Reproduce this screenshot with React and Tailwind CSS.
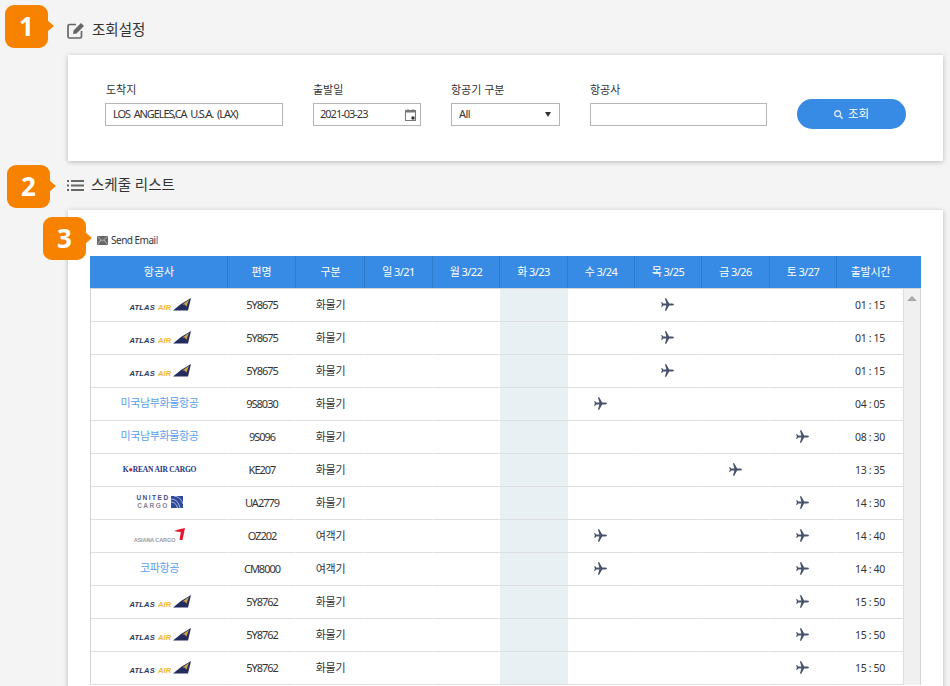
import React from "react";
import { FaSearch } from "react-icons/fa";

const days = ["일 3/21", "월 3/22", "화 3/23", "수 3/24", "목 3/25", "금 3/26", "토 3/27"];
const dayWidths = ["w-[68px]", "w-[67px]", "w-[68px]", "w-[67px]", "w-[67px]", "w-[68px]", "w-[67px]"];

const rows = [
  { air: "atlas", no: "5Y8675", type: "화물기", fly: [4], time: "01 : 15" },
  { air: "atlas", no: "5Y8675", type: "화물기", fly: [4], time: "01 : 15" },
  { air: "atlas", no: "5Y8675", type: "화물기", fly: [4], time: "01 : 15" },
  { air: "미국남부화물항공", no: "9S8030", type: "화물기", fly: [3], time: "04 : 05" },
  { air: "미국남부화물항공", no: "9S096", type: "화물기", fly: [6], time: "08 : 30" },
  { air: "korean", no: "KE207", type: "화물기", fly: [5], time: "13 : 35" },
  { air: "united", no: "UA2779", type: "화물기", fly: [6], time: "14 : 30" },
  { air: "asiana", no: "OZ202", type: "여객기", fly: [3, 6], time: "14 : 40" },
  { air: "코파항공", no: "CM8000", type: "여객기", fly: [3, 6], time: "14 : 40" },
  { air: "atlas", no: "5Y8762", type: "화물기", fly: [6], time: "15 : 50" },
  { air: "atlas", no: "5Y8762", type: "화물기", fly: [6], time: "15 : 50" },
  { air: "atlas", no: "5Y8762", type: "화물기", fly: [6], time: "15 : 50" },
];

function Badge({ n, className }) {
  return (
    <div className={`absolute z-10 w-[43px] h-[43px] rounded-[9px] bg-[#f78200] flex items-center justify-center text-white text-[26px] font-bold ${className}`}>
      {n}
      <span className="absolute left-[42px] top-[15px] border-y-[6px] border-y-transparent border-l-[7px] border-l-[#f78200]"></span>
    </div>
  );
}

function PlaneIcon() {
  return (
    <svg width="13" height="13" viewBox="0 0 13 13" className="mr-[1px] mb-[1px]">
      <path
        d="M13 6.5 Q13 5.6 10.8 5.5 L8.2 5.5 L5.2 0.3 L3.9 0.3 L5.4 5.5 L2.2 5.5 L1 3.9 L0.2 3.9 L0.9 6.5 L0.2 9.1 L1 9.1 L2.2 7.5 L5.4 7.5 L3.9 12.7 L5.2 12.7 L8.2 7.5 L10.8 7.5 Q13 7.4 13 6.5 Z"
        fill="#46526c"
      />
    </svg>
  );
}

function AtlasLogo() {
  return (
    <div className="flex items-end justify-center leading-none pl-[3px] mt-[-2px]">
      <span className="text-[7.5px] font-black italic text-[#2b3560] tracking-[0.2px] font-['Liberation_Sans'] mb-[-1px]">ATLAS</span>
      <span className="text-[7.5px] font-black italic text-[#f4b52c] tracking-[0.2px] ml-[3px] font-['Liberation_Sans'] mb-[-1px]">AIR</span>
      <svg width="18" height="13" viewBox="0 0 18 13" className="ml-[2px]">
        <path d="M0 12.5 L8 6 L18 0 L15 12.5 Z" fill="#232c5c" />
        <path d="M9.5 6.5 L16 1.8 L13.5 8.5 L11.5 6.5 Z" fill="#c9a24a" />
      </svg>
    </div>
  );
}

function KoreanLogo() {
  return (
    <div className="text-[7.5px] font-bold text-[#24347f] font-['Liberation_Serif'] tracking-[-0.2px] whitespace-nowrap leading-none mt-[-1px] ml-[1px]">
      K<span className="text-[#d8243a]">●</span>REAN AIR CARGO
    </div>
  );
}

function UnitedLogo() {
  return (
    <div className="flex items-center justify-center gap-[1px] pl-[1px] mt-[-2px]">
      <div className="text-[6.5px] leading-[8px] font-bold text-center tracking-[1.5px] font-['Liberation_Sans']">
        <div className="text-[#3f4c8f]">UNITED</div>
        <div className="text-[#7f8592]">CARGO</div>
      </div>
      <svg width="12" height="12" viewBox="0 0 12 12">
        <rect width="12" height="12" fill="#2f4a9c" />
        <path d="M0 3 Q7 3 9 12 M0 6 Q5 6 6.5 12 M3 0 Q10 1 12 8" stroke="#c7d2ee" strokeWidth="0.8" fill="none" />
      </svg>
    </div>
  );
}

function AsianaLogo() {
  return (
    <div className="flex items-end justify-center leading-none pl-[1px] mt-[-2px]">
      <span className="text-[5.5px] font-bold text-[#9a9a9a] tracking-[-0.1px] font-['Liberation_Sans'] whitespace-nowrap mb-[-1px]">ASIANA CARGO</span>
      <svg width="11" height="13" viewBox="0 0 11 13" className="ml-[-1px] mb-[2px]">
        <path d="M0 3 Q5 1 11 0 L8.5 12 L5.5 12 L6.8 4 Q3.5 4 0 3 Z" fill="#e3182d" />
      </svg>
    </div>
  );
}

function Airline({ air }) {
  if (air === "atlas") return <AtlasLogo />;
  if (air === "korean") return <KoreanLogo />;
  if (air === "united") return <UnitedLogo />;
  if (air === "asiana") return <AsianaLogo />;
  return <span className="text-[#5aa0ee] tracking-[-0.4px] mt-[-1px] ml-[1px]">{air}</span>;
}

export default function App() {
  return (
    <div className="relative h-[686px] w-[950px] overflow-hidden bg-[#f4f4f4] text-[11px] text-[#333] font-['Noto_Sans','Noto_Sans_CJK_KR',sans-serif]">
      <Badge n="1" className="left-[5px] top-[5px]" />
      <Badge n="2" className="left-[7px] top-[165px]" />
      <Badge n="3" className="left-[43px] top-[217px]" />

      <div className="pl-[68px] pr-[7px]">
        <div className="h-[55px] flex items-center gap-[7px] pt-[5px]">
          <EditIcon />
          <h2 className="text-[14.5px] text-[#333]">조회설정</h2>
        </div>

        {/* 조회 폼 */}
        <div className="h-[106px] bg-white shadow-[0_1px_5px_rgba(0,0,0,0.25)] pl-[37px] pt-[26px] flex gap-[30px]">
          <Field label="도착지" width="w-[178px]" labelClass="pl-[1px]">
            <span className="tracking-[-1.1px] [word-spacing:2px]">LOS ANGELES,CA U.S.A. (LAX)</span>
          </Field>
          <Field label="출발일" width="w-[108px]">
            <span className="tracking-[-1px] flex-1 ml-[-1px]">2021-03-23</span>
            <svg width="11" height="12" viewBox="0 0 11 12" className="mr-[-3px]">
              <rect x="0.5" y="1.5" width="10" height="10" fill="none" stroke="#777" />
              <rect x="0.5" y="1.5" width="10" height="2" fill="#777" />
              <rect x="2.5" y="0" width="1" height="2" fill="#777" />
              <rect x="7.5" y="0" width="1" height="2" fill="#777" />
              <rect x="6.5" y="7.5" width="3" height="3" fill="#333" />
            </svg>
          </Field>
          <Field label="항공기 구분" width="w-[109px]">
            <span className="flex-1 tracking-[-0.5px]">All</span>
            <span className="border-x-[3.5px] border-x-transparent border-t-[5px] border-t-[#333] mr-[1px]"></span>
          </Field>
          <Field label="항공사" width="w-[177px]"></Field>
          <button className="h-[30px] w-[109px] mt-[18px] rounded-full bg-[#388be5] text-white text-[11.5px] flex items-center justify-center gap-[5px]">
            <FaSearch className="text-[9px] text-[#dbe9fa]" />
            조회
          </button>
        </div>

        <div className="h-[49px] flex items-center gap-[7px] pb-[1px]">
          <ListIcon />
          <h2 className="text-[14.5px] text-[#333]">스케줄 리스트</h2>
        </div>

        {/* 스케줄 테이블 */}
        <div className="h-[480px] bg-white shadow-[0_1px_5px_rgba(0,0,0,0.25)] pl-[22px] pr-[22px] pt-[21px]">
          <div className="h-[25px] pl-[7px] pt-[2px] flex items-start gap-[3px] text-[10px] tracking-[-0.5px]">
            <MailIcon />
            <span>Send Emai<span className="text-[#2f6fc4]">l</span></span>
          </div>

          <div className="h-[32px] flex bg-[#388be5] text-white text-[11px] items-stretch">
            <div className="w-[138px] border-r border-[#2f7bce] flex items-center justify-center pl-[1px]">항공사</div>
            <div className="w-[68px] border-r border-[#2f7bce] flex items-center justify-center">편명</div>
            <div className="w-[69px] border-r border-[#2f7bce] flex items-center justify-center pl-[1px]">구분</div>
            {days.map((d, i) => (
              <div key={d} className={`${dayWidths[i]} border-r border-[#2f7bce] flex items-center justify-center tracking-[-0.6px]`}>{d}</div>
            ))}
            <div className="w-[67px] flex items-center justify-center tracking-[-0.2px]">출발시간</div>
          </div>

          <div className="flex border-x border-t border-[#d4d4d4]">
            <div className="w-[812px]">
              {rows.map((r, idx) => (
                <div key={idx} className="h-[33px] flex items-stretch">
                  <div className="w-[137px] flex items-center justify-center border-b border-b-[#dedede] border-r border-r-white"><Airline air={r.air} /></div>
                  <div className="w-[68px] flex items-center justify-center pl-[1px] tracking-[-1px] border-b border-b-[#dedede] border-r border-r-white">{r.no}</div>
                  <div className="w-[69px] flex items-center justify-center pl-[1px] tracking-[-0.3px] border-b border-b-[#dedede] border-r border-r-white">{r.type}</div>
                  {days.map((d, i) => (
                    <div key={d} className={`${dayWidths[i]} flex items-center justify-center border-b border-b-[#dedede] ${i === 2 ? "bg-[#e9f0f3]" : "border-r border-r-white"}`}>
                      {r.fly.includes(i) && <PlaneIcon />}
                    </div>
                  ))}
                  <div className="flex-1 flex items-center justify-center pt-[1px] tracking-[-0.35px] text-[10.5px] border-b border-b-[#dedede]">{r.time}</div>
                </div>
              ))}
            </div>
            <div className="flex-1 bg-[#f0f0f0] border-l border-[#dedede] flex justify-center pt-[7px]">
              <span className="h-0 border-x-[5px] border-x-transparent border-b-[5px] border-b-[#a8a8a8]"></span>
            </div>
          </div>
        </div>
      </div>
    </div>
  );
}

function Field({ label, width, labelClass = "", children }) {
  return (
    <div className={width}>
      <div className={`h-[22px] pt-[1px] text-[11px] leading-[16px] text-[#333] ${labelClass}`}>{label}</div>
      <div className="h-[23px] border border-[#b5b5b5] bg-white flex items-center px-[7px]">{children}</div>
    </div>
  );
}

function EditIcon() {
  return (
    <svg width="18" height="17" viewBox="0 0 18 17" className="ml-[-1px]">
      <path d="M9 2.5 H2.5 Q1 2.5 1 4 V14.5 Q1 16 2.5 16 H13 Q14.5 16 14.5 14.5 V9" fill="none" stroke="#666" strokeWidth="1.7" />
      <path d="M6 12 L6.6 8.6 L14 1 L17 4 L9.6 11.4 Z" fill="#666" />
    </svg>
  );
}

function MailIcon() {
  return (
    <svg width="11" height="9" viewBox="0 0 11 9" className="mt-[3px]">
      <rect width="11" height="9" fill="#666" />
      <path d="M0.5 0.5 L5.5 5 L10.5 0.5 M0.5 8.5 L4 4 M10.5 8.5 L7 4" stroke="#ddd" strokeWidth="0.7" fill="none" />
    </svg>
  );
}

function ListIcon() {
  return (
    <svg width="17" height="13" viewBox="0 0 17 13" className="ml-[-1px]">
      <g fill="#666">
        <rect x="0" y="1" width="2" height="2" />
        <rect x="0" y="5.5" width="2" height="2" />
        <rect x="0" y="10" width="2" height="2" />
        <rect x="4" y="1" width="13" height="2" />
        <rect x="4" y="5.5" width="13" height="2" />
        <rect x="4" y="10" width="13" height="2" />
      </g>
    </svg>
  );
}
